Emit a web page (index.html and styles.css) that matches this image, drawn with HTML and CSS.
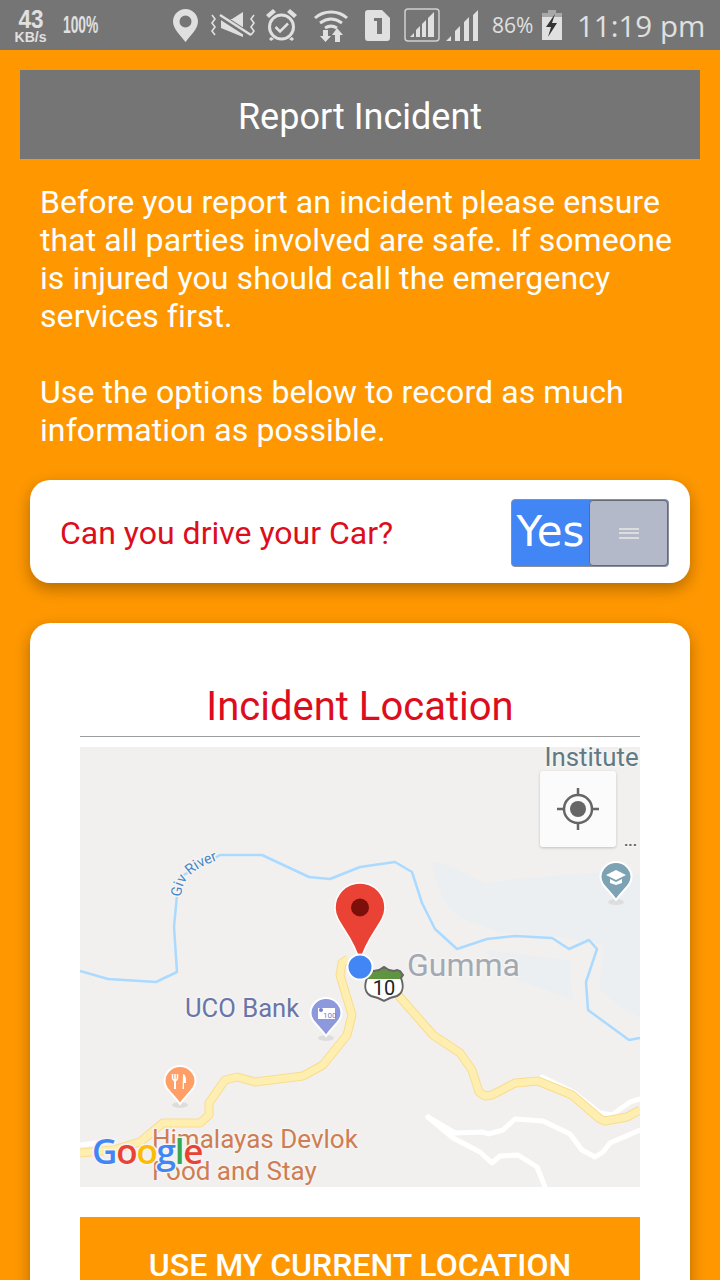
FILE: index.html
```html
<!DOCTYPE html>
<html lang="en">
<head>
    <meta charset="UTF-8">
    <meta name="viewport" content="width=device-width, initial-scale=1">
    <title>Report Incident</title>
    <link rel="stylesheet" href="styles.css">
</head>
<body>
<section class="wrap">

    <div class="statusBar">
        <div class="speed"><span class="speedNum">43</span><span class="speedUnit">KB/s</span></div>
        <span class="saver">100%</span>

        <svg class="icPin" width="25" height="33" viewBox="0 0 25 33">
            <path fill="#e0e0e0" fill-rule="evenodd" d="M12.5 0C5.6 0 0 5.6 0 12.5 0 20 8 27 12.5 33 17 27 25 20 25 12.5 25 5.6 19.4 0 12.5 0zM12.5 6.500a6 6 0 1 1 0 12 6 6 0 0 1 0-12z"/>
        </svg>
        <svg class="icMute" width="47" height="26" viewBox="0 0 47 26">
            <path fill="#e0e0e0" d="M11 7h11L33 0v25L11 16z"/>
            <path stroke="#757575" stroke-width="6" d="M10 4l31 20"/>
            <path stroke="#e0e0e0" stroke-width="2.500" d="M10 3l31 20"/>
            <path fill="none" stroke="#e0e0e0" stroke-width="1.600" d="M2 3l3 4-3 4 3 4-3 4 3 4M44 3l-3 4 3 4-3 4 3 4-3 4"/>
        </svg>
        <svg class="icAlarm" width="31" height="32" viewBox="0 0 31 32">
            <circle cx="15.500" cy="18" r="12" fill="none" stroke="#e0e0e0" stroke-width="3"/>
            <path fill="none" stroke="#e0e0e0" stroke-width="2.500" d="M9.500 18l4.500 4.500 8-8"/>
            <path fill="#e0e0e0" d="M0 6l7-6 3 3-7 6zM31 6l-7-6-3 3 7 6zM5 28l3 2-3 2-2-2zM26 28l-3 2 3 2 2-2z"/>
        </svg>
        <svg class="icWifi" width="34" height="33" viewBox="0 0 34 33">
            <path fill="none" stroke="#e0e0e0" stroke-width="3" d="M1 9C10 1 24 1 33 9M6 14c7-5 15-5 22 0M11 19c4-2.500 8-2.500 12 0"/>
            <path fill="#e0e0e0" d="M9 21h5v6h3l-5.500 6L6 27h3zM23 19l6 7h-3v7h-5v-7h-3z"/>
        </svg>
        <svg class="icSim" width="25" height="31" viewBox="0 0 25 31">
            <path fill="#e0e0e0" fill-rule="evenodd" d="M3 0h14l8 8v20a3 3 0 0 1-3 3H3a3 3 0 0 1-3-3V3a3 3 0 0 1 3-3zM9 8v3h3v13h5V8z"/>
        </svg>
        <svg class="icSignalBox" width="36" height="34" viewBox="0 0 36 34">
            <rect x="1" y="1" width="34" height="32" rx="3" fill="none" stroke="#d0d0d0" stroke-width="1.500"/>
            <path fill="#e0e0e0" d="M6 29l4-4v4zM12 29v-7l4-4v11zM18 29V16l4-4v17zM24 29V10l6-6v25z"/>
        </svg>
        <svg class="icSignal" width="33" height="31" viewBox="0 0 33 31">
            <path fill="#e0e0e0" d="M0 31l5-5v5zM9 31V21l5-5v15zM18 31V12l5-5v24zM27 31V5l5-5v31z"/>
        </svg>
        <span class="battery">86%</span>
        <svg class="icBatt" width="20" height="30" viewBox="0 0 20 30">
            <path fill="#a8a8a8" d="M6 0h8v3h6v6H0V3h6z"/>
            <rect y="7" width="20" height="23" fill="#e0e0e0"/>
            <path fill="#333" d="M13 4L4 17h5l-3 10 9-14h-5z"/>
        </svg>
        <span class="clock">11:19 pm</span>
    </div>

    <section class="content">
        <h1 class="pageTitle">Report Incident</h1>

        <p class="intro">Before you report an incident please ensure that all parties involved are safe. If someone is injured you should call the emergency services first.<br><br>Use the options below to record as much information as possible.</p>

        <div class="card driveCard">
            <span class="driveLabel">Can you drive your Car?</span>
            <div class="toggle">
                <span class="toggleOn">Yes</span>
                <span class="toggleHandle"><i></i></span>
            </div>
        </div>

        <div class="card locationCard">
            <h2 class="locTitle">Incident Location</h2>

            <div class="map">
                <svg class="mapDraw" width="560" height="440" viewBox="0 0 560 440">
                    <defs>
                        <path id="rivercurve" d="M101 150C102 133 110 122 143 111"/>
                    </defs>

                    <!-- water patches -->
                    <g fill="#ebeff1">
                        <path d="M352 116C362 112 390 130 407 136 430 132 470 128 493 128 520 124 545 126 560 128V271C545 262 528 252 520 242 518 225 528 205 522 198L480 190 420 186 395 176C370 170 358 150 352 116z"/>
                        <path d="M403 203L490 213 493 253 437 233z"/>
                    </g>

                    <!-- rivers -->
                    <g fill="none" stroke="#aadaff" stroke-width="2.500" stroke-linejoin="round">
                        <path d="M0 224L28 232 76 235 97 225 94 180 97 148 100 130 140 108H182L229 130 250 132 280 120 315 115 332 125 342 156 355 182 377 202 407 192 435 189 472 191 489 202 509 193 517 202 506 235 508 263 549 293 560 291"/>
                    </g>

                    <!-- small white roads -->
                    <g fill="none" stroke="#fff" stroke-width="5" stroke-linejoin="round" stroke-linecap="round">
                        <path d="M348 370L375 386 403 385 408 387 423 383 435 372 463 374 490 387 502 403 515 410 523 405 530 396 560 383"/>
                        <path d="M348 370L373 391 400 405 412 416 420 409 438 408 457 420 465 440"/>
                        <path d="M462 330L493 345 520 366 532 368 550 355 560 352"/>
                        <path d="M0 398L34 394"/>
                    </g>

                    <!-- main road -->
                    <g fill="none" stroke-linejoin="round">
                        <path stroke="#f9dc8f" stroke-width="9" d="M0 406L33 403 60 395 83 376H120L129 368V356L145 333 157 330 175 335 223 329 243 318 267 288 272 268 260 228 262 216 268 212M318 248L353 288 380 306 392 323 399 345 405 349 412 348 435 336 458 334 492 348 520 372 525 374 547 370 560 363"/>
                        <path stroke="#feeeb0" stroke-width="7" d="M0 406L33 403 60 395 83 376H120L129 368V356L145 333 157 330 175 335 223 329 243 318 267 288 272 268 260 228 262 216 268 212M318 248L353 288 380 306 392 323 399 345 405 349 412 348 435 336 458 334 492 348 520 372 525 374 547 370 560 363"/>
                    </g>

                    <!-- poi pins -->
                    <ellipse cx="246" cy="291" rx="8" ry="3" fill="#ddd"/>
                    <path fill="#8e99dd" stroke="#fff" stroke-width="2" d="M246 251c-8.500 0-15.500 7-15.500 15 0 8 8 12 15.500 23 7.500-11 15.500-15 15.500-23 0-8-7-15-15.500-15z"/>
                    <rect x="238" y="261" width="17" height="11" fill="#fff"/>
                    <circle cx="241" cy="263" r="2" fill="#7480cf"/>
                    <text class="poiSmall" x="243" y="271">100</text>

                    <ellipse cx="100" cy="358" rx="8" ry="3" fill="#ddd"/>
                    <path fill="#ff9e67" stroke="#fff" stroke-width="2" d="M100 319c-8.500 0-15.500 7-15.500 15 0 8 8 12 15.500 23 7.500-11 15.500-15 15.500-23 0-8-7-15-15.500-15z"/>
                    <path fill="none" stroke="#fff" stroke-width="1.500" d="M95 327v6M92.500 327v4c0 2 2.500 3 2.500 3s2.500-1 2.500-3v-4"/>
                    <path fill="#fff" d="M94 334h2v8h-2zM103 327c2 0 3 3 3 7v2h-2v6h-1.500z"/>

                    <ellipse cx="536" cy="155" rx="8" ry="3" fill="#ddd"/>
                    <path fill="#7da2b3" stroke="#fff" stroke-width="2" d="M536 115c-8.500 0-15.500 7-15.500 15 0 8 8 12 15.500 23 7.500-11 15.500-15 15.500-23 0-8-7-15-15.500-15z"/>
                    <path fill="#fff" d="M536 123l10 5-10 5-10-5zM530 132l6 3 6-3v4l-6 2-6-2z"/>

                    <!-- map labels -->
                    <g class="mapLabels">
                        <text class="lblInstitute" x="464.500" y="19">Institute</text>
                        <text class="lblTown" x="327" y="229">Gumma</text>
                        <text class="lblBank" x="105" y="270">UCO Bank</text>
                        <text class="lblFood" x="72" y="401">Himalayas Devlok</text>
                        <text class="lblFood" x="72" y="433">Food and Stay</text>
                        <text class="lblRiver"><textPath href="#rivercurve">Giv River</textPath></text>
                        <text class="lblDots" x="544" y="99">...</text>
                    </g>

                    <!-- route shield -->
                    <path fill="#fff" d="M288 224l3-1 3 1 5-1 5-3 5 3 5 1 3-1 3 1 3 4-2 3c3 8 2 15-4 18l-7 2-6 3-6-3-7-2c-6-3-7-10-4-18l-2-3z"/>
                    <path fill="#5f9440" d="M285 228l3-4 3-1 3 1 5-1 5-3 5 3 5 1 3-1 3 1 3 4-2 4h-34z"/>
                    <path fill="none" stroke="#666" stroke-width="2" d="M288 224l3-1 3 1 5-1 5-3 5 3 5 1 3-1 3 1 3 4-2 3c3 8 2 15-4 18l-7 2-6 3-6-3-7-2c-6-3-7-10-4-18l-2-3z"/>
                    <text class="shieldNum" x="304" y="248">10</text>

                    <!-- red marker and my position -->
                    <path fill="#ea4335" stroke="#fff" stroke-width="1.500" d="M280 136c-14 0-25 11-25 25 0 15 17 25 25 54 8-29 25-39 25-54 0-14-11-25-25-25z"/>
                    <circle cx="280" cy="160.500" r="9" fill="#7d0f0b"/>
                    <circle cx="280" cy="220" r="12.500" fill="#4285f4" stroke="#fff" stroke-width="2"/>

                    <!-- logo, real text in one colour per letter -->
                    <text class="gLogo" x="12" y="417"><tspan fill="#4285f4">G</tspan><tspan fill="#ea4335">o</tspan><tspan fill="#fbbc05">o</tspan><tspan fill="#4285f4">g</tspan><tspan fill="#34a853">l</tspan><tspan fill="#ea4335">e</tspan></text>
                </svg>

                <div class="locateBtn">
                    <svg width="44" height="44" viewBox="0 0 44 44">
                        <circle cx="22" cy="22" r="14" fill="none" stroke="#666" stroke-width="2.500"/>
                        <circle cx="22" cy="22" r="8" fill="#666"/>
                        <path stroke="#666" stroke-width="2.500" d="M22 1v8M22 35v8M1 22h8M35 22h8"/>
                    </svg>
                </div>
            </div>

            <button type="button" class="useLocation">USE MY CURRENT LOCATION</button>
        </div>
    </section>

</section>
</body>
</html>
```

FILE: styles.css
```css
*{
    box-sizing:border-box;
}
html,body{
    margin:0;
    padding:0;
}
.wrap{
    width:720px;
    height:1280px;
    overflow:hidden;
    background-color:#ff9800;
    font-family:Roboto,sans-serif;
    color:#fff;
}
svg{
    display:block;
    flex:none;
}

/* status bar */
.statusBar{
    height:50px;
    background-color:#757575;
    display:flex;
    align-items:center;
    color:#e0e0e0;
}
.speed{
    width:33px;
    margin-left:14px;
    display:flex;
    flex-direction:column;
    align-items:center;
    font-family:"Liberation Sans",sans-serif;
    font-weight:bold;
    line-height:1;
}
.speedNum{
    font-size:25px;
    height:23px;
    transform:scaleX(.9);
}
.speedUnit{
    font-size:14px;
}
.saver{
    margin-left:16px;
    font-family:"Liberation Sans",sans-serif;
    font-weight:bold;
    font-size:23px;
    transform:scaleX(.6);
    transform-origin:left;
    width:33px;
    white-space:nowrap;
}
.icPin{ margin-left:77px; }
.icMute{ margin-left:12px; }
.icAlarm{ margin-left:9px; }
.icWifi{ margin-left:17px; }
.icSim{ margin-left:17px; }
.icSignalBox{ margin-left:14px; }
.icSignal{ margin-left:6px; }
.battery{
    margin-left:13px;
    font-family:"Open Sans",sans-serif;
    font-size:21px;
    width:44px;
}
.icBatt{ margin-left:6px; }
.clock{
    margin-left:15px;
    font-family:"Open Sans",sans-serif;
    font-weight:400;
    font-size:29.500px;
    white-space:nowrap;
}

/* page */
.content{
    padding:20px 20px 0;
}
.pageTitle{
    margin:0;
    height:89px;
    line-height:95px;
    background-color:#757575;
    text-align:center;
    font-size:36px;
    font-weight:400;
}
.intro{
    margin:24px 20px 0;
    font-size:32px;
    line-height:38px;
    letter-spacing:.09px;
}
.card{
    margin:0 10px;
    background-color:#fff;
    border-radius:20px;
    box-shadow:0 6px 16px rgba(90,50,0,.45);
}
.driveCard{
    margin-top:31px;
    height:103px;
    padding:3px 21px 0 30px;
    display:flex;
    align-items:center;
    justify-content:space-between;
}
.driveLabel{
    color:#dd0d1d;
    font-size:32px;
}
.toggle{
    width:158px;
    height:68px;
    display:flex;
    border-radius:4px;
    background-color:#4285f4;
    overflow:hidden;
    border:1px solid #8a8f9a;
}
.toggleOn{
    width:77px;
    text-align:center;
    font-family:"DejaVu Sans",sans-serif;
    font-size:42px;
    line-height:64px;
}
.toggleHandle{
    flex:1;
    background-color:#b3b9c9;
    border:1px solid #666a75;
    border-radius:4px;
    display:flex;
    align-items:center;
    justify-content:center;
}
.toggleHandle i{
    display:block;
    width:20px;
    height:11px;
    border-top:2px solid #ddd;
    border-bottom:2px solid #ddd;
    background:linear-gradient(#ddd,#ddd) center/100% 2px no-repeat;
}
.locationCard{
    margin-top:40px;
    padding:59px 50px 0;
    height:720px;
}
.locTitle{
    margin:0;
    height:55px;
    line-height:50px;
    color:#dd0d1d;
    font-size:40px;
    font-weight:400;
    text-align:center;
    border-bottom:1px solid #9e9e9e;
}
.map{
    position:relative;
    margin-top:10px;
    height:440px;
    background-color:#f2f0ee;
    overflow:hidden;
}
.locateBtn{
    position:absolute;
    left:460px;
    top:24px;
    width:76px;
    height:76px;
    background-color:#fbfbfb;
    border-radius:3px;
    box-shadow:0 1px 3px rgba(0,0,0,.2);
    display:flex;
    align-items:center;
    justify-content:center;
}
.mapLabels text{
    paint-order:stroke;
    stroke:#f5f4f2;
    stroke-width:3px;
    stroke-linejoin:round;
}
.lblInstitute{
    font-size:25.800px;
    fill:#5f7a85;
}
.lblTown{
    font-size:32px;
    fill:#a3a9b2;
}
.lblBank{
    font-size:25.600px;
    fill:#6a75a8;
}
.lblFood{
    font-size:26px;
    fill:#cf7d52;
}
.lblRiver{
    font-size:14.500px;
    fill:#4a86c8;
}
.lblDots{
    font-size:15px;
    font-weight:bold;
    fill:#666;
}
.poiSmall{
    font-size:8px;
    fill:#7480cf;
}
.shieldNum{
    font-size:20px;
    fill:#222;
    text-anchor:middle;
}
.gLogo{
    font-family:"Open Sans",sans-serif;
    font-size:35px;
    font-weight:600;
    letter-spacing:-1.200px;
    paint-order:stroke;
    stroke:#f5f4f2;
    stroke-width:3px;
}
.useLocation{
    display:block;
    width:100%;
    height:90px;
    margin-top:30px;
    border:none;
    background-color:#ff9800;
    color:#fff;
    font-family:Roboto,sans-serif;
    font-size:32px;
    font-weight:500;
    padding:6px 0 0;
}
```
